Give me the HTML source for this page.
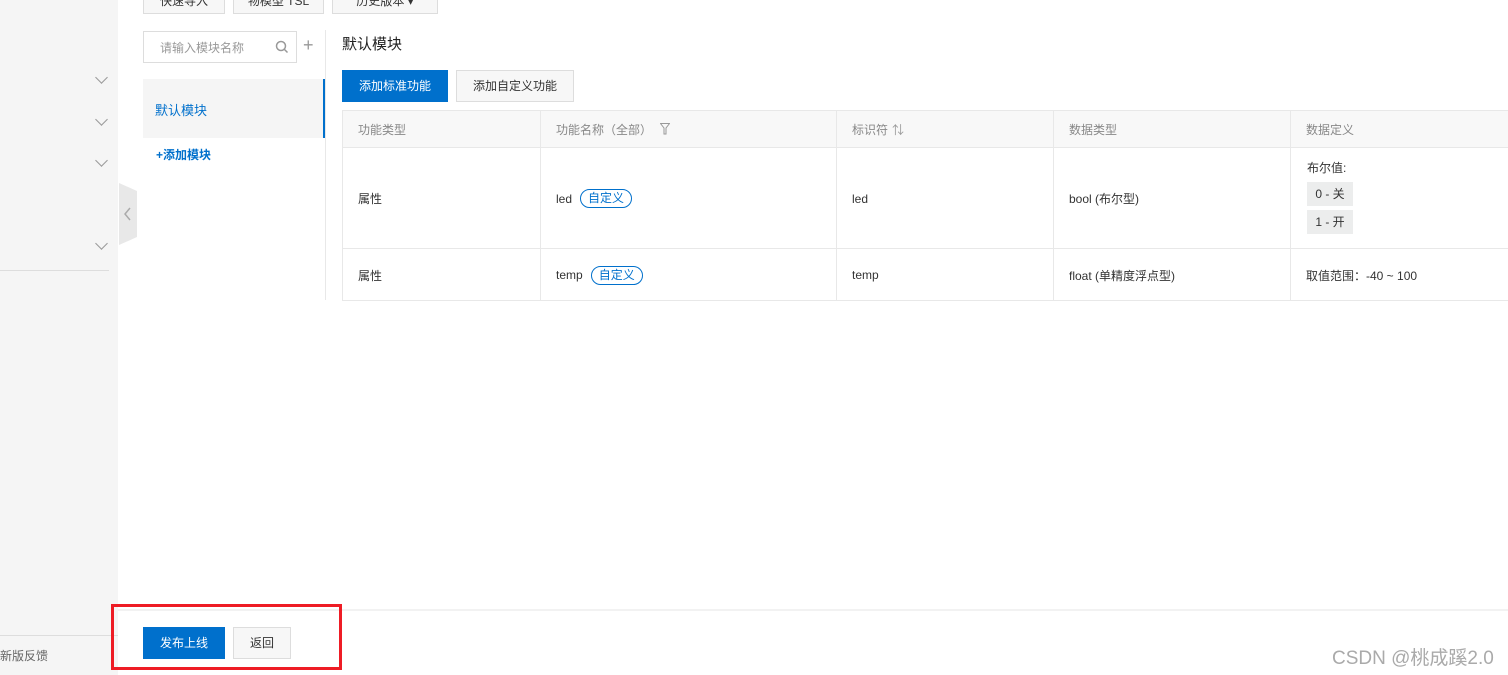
<!DOCTYPE html>
<html><head><meta charset="utf-8"><style>
*{margin:0;padding:0;box-sizing:border-box}
body{width:1508px;height:675px;overflow:hidden;background:#fff;font-family:"Liberation Sans","Noto Sans CJK SC",sans-serif;font-size:12px;color:#333;position:relative}
.a{position:absolute}
.btn{position:absolute;border:1px solid #ddd;background:#f7f7f7;color:#333;text-align:center;font-size:12px}
.chev{position:absolute;width:9px;height:9px;border-right:1.5px solid #999;border-bottom:1.5px solid #999;transform:rotate(45deg)}
.tag{display:inline-block;border:1px solid #0070cc;color:#0070cc;border-radius:10px;padding:0 7px;height:19px;line-height:17px;margin-left:8px;font-size:12px}
.cell{position:absolute;display:flex;align-items:center;padding-left:16px}
.vl{position:absolute;width:1px;background:#e8e8e8}
.hl{position:absolute;height:1px;background:#e8e8e8}
</style></head><body>
<div class="a" style="left:0;top:0;width:118px;height:675px;background:#f5f5f5"></div>
<div class="chev" style="left:97px;top:73px"></div>
<div class="chev" style="left:97px;top:115px"></div>
<div class="chev" style="left:97px;top:156px"></div>
<div class="chev" style="left:97px;top:239px"></div>
<div class="a" style="left:0;top:270px;width:109px;height:1px;background:#ddd"></div>
<div class="a" style="left:0;top:635px;width:118px;height:1px;background:#ddd"></div>
<div class="a" style="left:0;top:647px;color:#666;font-size:12px">新版反馈</div>
<svg class="a" style="left:119px;top:183px" width="18" height="62"><polygon points="0,0 18,8 18,54 0,62" fill="#e8e8e8"/><polyline points="11,25 6,31 11,37" fill="none" stroke="#aaa" stroke-width="1.5"/></svg>

<div class="btn" style="left:143px;top:-8px;width:82px;height:22px;line-height:16px">快速导入</div>
<div class="btn" style="left:233px;top:-8px;width:91px;height:22px;line-height:16px">物模型 TSL</div>
<div class="btn" style="left:332px;top:-8px;width:106px;height:22px;line-height:16px">历史版本 ▾</div>

<div class="a" style="left:143px;top:31px;width:154px;height:32px;border:1px solid #ddd"></div>
<div class="a" style="left:160px;top:39px;color:#999">请输入模块名称</div>
<svg class="a" style="left:275px;top:40px" width="14" height="14"><circle cx="6" cy="6" r="4.5" fill="none" stroke="#999" stroke-width="1.5"/><line x1="9.5" y1="9.5" x2="12.5" y2="12.5" stroke="#999" stroke-width="1.5"/></svg>
<div class="a" style="left:303px;top:35px;color:#999;font-size:18px;line-height:20px">+</div>
<div class="a" style="left:325px;top:30px;width:1px;height:270px;background:#e8e8e8"></div>
<div class="a" style="left:143px;top:79px;width:180px;height:59px;background:#f5f5f5"></div>
<div class="a" style="left:323px;top:79px;width:2px;height:59px;background:#0070cc"></div>
<div class="a" style="left:155px;top:100px;color:#0070cc;font-size:13px">默认模块</div>
<div class="a" style="left:156px;top:146px;color:#0070cc;font-weight:bold">+添加模块</div>

<div class="a" style="left:342px;top:33px;font-size:15px;color:#222">默认模块</div>
<div class="a" style="left:342px;top:70px;width:106px;height:32px;background:#0070cc;color:#fff;text-align:center;line-height:32px">添加标准功能</div>
<div class="btn" style="left:456px;top:70px;width:118px;height:32px;line-height:30px">添加自定义功能</div>

<div class="a" style="left:342px;top:110px;width:1166px;height:38px;background:#f8f8f8"></div>
<div class="hl" style="left:342px;top:110px;width:1166px"></div>
<div class="hl" style="left:342px;top:147px;width:1166px"></div>
<div class="hl" style="left:342px;top:248px;width:1166px"></div>
<div class="hl" style="left:342px;top:300px;width:1166px"></div>
<div class="vl" style="left:342px;top:110px;height:191px"></div>
<div class="vl" style="left:540px;top:110px;height:191px"></div>
<div class="vl" style="left:836px;top:110px;height:191px"></div>
<div class="vl" style="left:1053px;top:110px;height:191px"></div>
<div class="vl" style="left:1290px;top:110px;height:191px"></div>

<div class="cell" style="left:342px;top:110px;height:38px;color:#888">功能类型</div>
<div class="cell" style="left:540px;top:110px;height:38px;color:#888">功能名称（全部）<svg style="margin-left:8px" width="10" height="12"><path d="M0.5,0.5 H9.5 L6,5 V11 H4 V5 Z" fill="none" stroke="#999"/></svg></div>
<div class="cell" style="left:836px;top:110px;height:38px;color:#888">标识符 <span style="margin-left:4px;color:#999">⇅</span></div>
<div class="cell" style="left:1053px;top:110px;height:38px;color:#888">数据类型</div>
<div class="cell" style="left:1290px;top:110px;height:38px;color:#888">数据定义</div>

<div class="cell" style="left:342px;top:148px;height:101px">属性</div>
<div class="cell" style="left:540px;top:148px;height:101px">led<span class="tag">自定义</span></div>
<div class="cell" style="left:836px;top:148px;height:101px">led</div>
<div class="cell" style="left:1053px;top:148px;height:101px">bool (布尔型)</div>
<div class="a" style="left:1307px;top:159px">布尔值:</div>
<div class="a" style="left:1307px;top:182px;width:46px;height:24px;background:#eceded;text-align:center;line-height:24px">0 - 关</div>
<div class="a" style="left:1307px;top:210px;width:46px;height:24px;background:#eceded;text-align:center;line-height:24px">1 - 开</div>

<div class="cell" style="left:342px;top:249px;height:52px">属性</div>
<div class="cell" style="left:540px;top:249px;height:52px">temp<span class="tag">自定义</span></div>
<div class="cell" style="left:836px;top:249px;height:52px">temp</div>
<div class="cell" style="left:1053px;top:249px;height:52px">float (单精度浮点型)</div>
<div class="cell" style="left:1290px;top:249px;height:52px">取值范围：-40 ~ 100</div>

<div class="a" style="left:118px;top:609px;width:1390px;height:2px;background:#f2f2f2"></div>
<div class="a" style="left:143px;top:627px;width:82px;height:32px;background:#0070cc;color:#fff;text-align:center;line-height:32px">发布上线</div>
<div class="btn" style="left:233px;top:627px;width:58px;height:32px;line-height:30px">返回</div>
<div class="a" style="left:111px;top:604px;width:231px;height:66px;border:3px solid #ee1c25"></div>
<div class="a" style="left:1332px;top:643px;font-size:19px;color:#aaa">CSDN @桃成蹊2.0</div>
</body></html>
